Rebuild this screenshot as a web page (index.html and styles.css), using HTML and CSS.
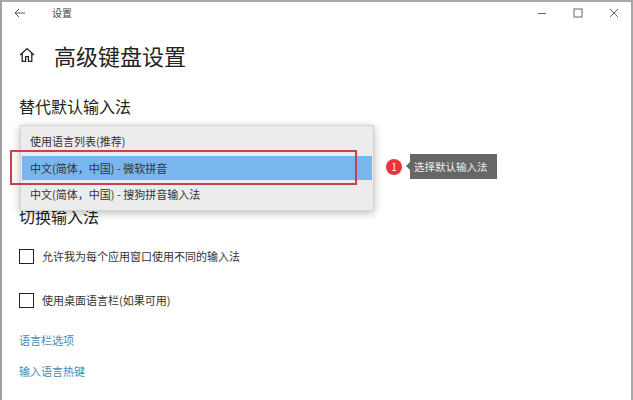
FILE: index.html
```html
<!DOCTYPE html>
<html lang="zh-CN">
<head>
  <meta charset="UTF-8" />
  <meta name="viewport" content="width=device-width, initial-scale=1" />
  <title>设置</title>
  <link rel="stylesheet" href="styles.css">
</head>
<body>
  <div class="window">
    <!-- Title bar -->
    <div class="titlebar">
      <svg class="back" width="12" height="10" viewBox="0 0 12 10" fill="none" stroke="#555" stroke-width="1">
        <path d="M11 5H1M5 1L1 5l4 4" />
      </svg>
      <span class="app-name">设置</span>
      <div class="controls">
        <svg width="10" height="10" viewBox="0 0 10 10" fill="none" stroke="#666"><path d="M1 5.500H9" /></svg>
        <svg width="10" height="10" viewBox="0 0 10 10" fill="none" stroke="#666"><rect x="1" y="1" width="8" height="8" /></svg>
        <svg width="10" height="10" viewBox="0 0 10 10" fill="none" stroke="#666"><path d="M1 1l8 8M9 1l-8 8" /></svg>
      </div>
    </div>

    <div class="content">
      <div class="page-head">
        <svg width="16" height="16" viewBox="0 0 15 15" fill="none" stroke="#222" stroke-width="1.200">
          <path d="M1 7.500L7.500 1.500 14 7.500M3 6v7.500h3.200V9h2.600v4.500H12V6" />
        </svg>
        <h1>高级键盘设置</h1>
      </div>

      <h2 class="override-title">替代默认输入法</h2>

      <!-- Dropdown menu lies over the next heading -->
      <div class="picker">
        <div class="menu">
          <div class="option">使用语言列表(推荐)</div>
          <div class="option selected">中文(简体，中国) - 微软拼音</div>
          <div class="option">中文(简体，中国) - 搜狗拼音输入法</div>
        </div>
        <div class="red-box"></div>
        <div class="callout">
          <span class="badge">1</span>
          <span class="tip">选择默认输入法</span>
        </div>
      </div>

      <h2 class="switch-title">切换输入法</h2>

      <label class="check-row"><span class="box"></span>允许我为每个应用窗口使用不同的输入法</label>
      <label class="check-row"><span class="box"></span>使用桌面语言栏(如果可用)</label>

      <a class="link first" href="#">语言栏选项</a>
      <a class="link" href="#">输入语言热键</a>
    </div>
  </div>
</body>
</html>
```

FILE: styles.css
```css
html, body {
  margin: 0;
  height: 100%;
}

body {
  font-family: "Noto Sans CJK SC", "Liberation Sans", sans-serif;
  background: #fff;
  color: #333;
  overflow: hidden;
}

.window {
  box-sizing: border-box;
  height: 400px;
  border-top: 2px solid #a8a8a8;
  border-left: 2px solid #a0a0a0;
  border-right: 2px solid #a8a8a8;
}

.titlebar {
  display: flex;
  align-items: center;
  height: 22px;
  padding-left: 12px;
  font-size: 10px;
  color: #444;
}

.back {
  margin-right: 26px;
}

.app-name {
  line-height: 22px;
}

.controls {
  display: flex;
  gap: 26px;
  margin-left: auto;
  margin-right: 12px;
}

.content {
  padding: 16px 0 0 17px;
}

.page-head {
  display: flex;
  align-items: center;
  gap: 19px;
}

.page-head h1 {
  margin: 0;
  font-size: 22px;
  font-weight: 400;
  line-height: 30px;
  color: #222;
}

h2 {
  margin: 0;
  font-size: 16px;
  font-weight: 400;
  line-height: 22px;
  color: #222;
}

.override-title {
  margin-top: 25px;
}

.picker {
  position: relative;
  height: 78px;
}

.menu {
  position: absolute;
  z-index: 1;
  left: 1px;
  top: 8px;
  box-sizing: border-box;
  width: 354px;
  height: 86px;
  padding: 2px 1px;
  background: #ececec;
  border: 1px solid #d4d4d4;
  box-shadow: 0 2px 8px rgba(0, 0, 0, 0.28);
}

.option {
  height: 27px;
  padding-left: 8px;
  font-size: 11px;
  line-height: 27px;
  color: #333;
}

.option.selected {
  height: 24px;
  margin: 1px 0;
  line-height: 24px;
  background: #79b6ee;
}

.red-box {
  position: absolute;
  z-index: 2;
  left: -9px;
  top: 33px;
  box-sizing: border-box;
  width: 347px;
  height: 35px;
  border: 2px solid #c9414a;
}

.callout {
  position: absolute;
  left: 367px;
  top: 37px;
  display: flex;
  align-items: center;
  gap: 8px;
}

.badge {
  width: 16px;
  height: 16px;
  border-radius: 50%;
  background: #e8343a;
  color: #fff;
  font-size: 10px;
  line-height: 16px;
  text-align: center;
}

.tip {
  position: relative;
  height: 25px;
  padding: 0 9px 0 4px;
  background: #666;
  color: #eee;
  font-size: 10.500px;
  line-height: 25px;
}

.tip::before {
  content: "";
  position: absolute;
  left: -4px;
  top: 8px;
  border-top: 4px solid transparent;
  border-bottom: 4px solid transparent;
  border-right: 4px solid #666;
}

.switch-title {
  margin-top: 10px;
}

.check-row {
  display: flex;
  align-items: center;
  gap: 8px;
  height: 16px;
  margin-top: 21px;
  font-size: 11px;
  color: #333;
}

.check-row + .check-row {
  margin-top: 28px;
}

.box {
  box-sizing: border-box;
  width: 15px;
  height: 15px;
  border: 1.500px solid #222;
}

.link {
  display: block;
  font-size: 11px;
  line-height: 16px;
  color: #3f8db4;
  text-decoration: none;
  margin-top: 15px;
}

.link.first {
  margin-top: 24px;
}
```
